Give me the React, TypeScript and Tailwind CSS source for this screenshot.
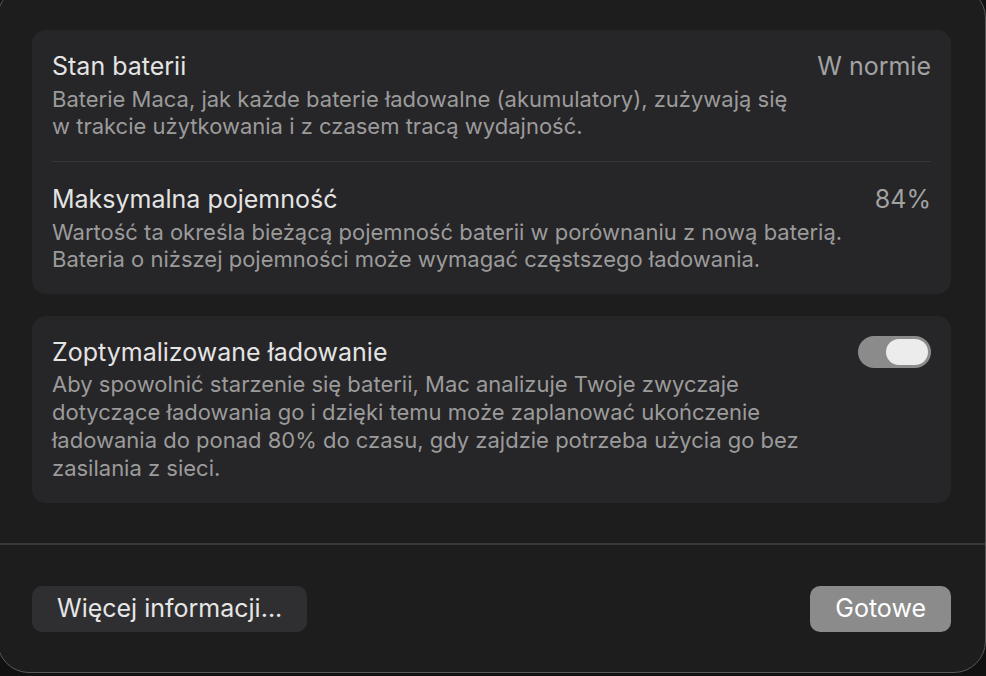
import { Fragment } from "react";

const font = { fontFamily: "Inter, 'Noto Sans', sans-serif" };

function Lines({ lines }: { lines: string[] }) {
  return (
    <>
      {lines.map((l, i) => (
        <Fragment key={i}>
          {l}
          {i < lines.length - 1 && <br />}
        </Fragment>
      ))}
    </>
  );
}

function Row({
  title,
  value,
  desc,
  className,
}: {
  title: string;
  value: string;
  desc: string[];
  className?: string;
}) {
  return (
    <div className={className}>
      <div className="flex h-[28px] items-center justify-between">
        <span className="text-[25px] leading-[28px] text-[#e4e4e4]">{title}</span>
        <span className="text-[25px] leading-[28px] text-[#a2a2a2]">{value}</span>
      </div>
      <p className="mt-[6px] text-[22px] leading-[27px] text-[#9b9b9b] whitespace-nowrap">
        <Lines lines={desc} />
      </p>
    </div>
  );
}

export default function App() {
  return (
    <div className="w-[986px] h-[676px] overflow-hidden bg-[#111111]" style={font}>
      <div className="-ml-[3px] -mt-[14px] w-[989px] h-[687px] rounded-[32px] border border-[#595959] bg-[#1e1d1e] flex flex-col">
        <div className="px-[34px] pt-[43px] flex flex-col gap-[22px]">
          <div className="rounded-[14px] bg-[#262527] px-[20px]">
            <Row
              className="pt-[22px] pb-[21px] border-b border-[#363537]"
              title="Stan baterii"
              value="W normie"
              desc={[
                "Baterie Maca, jak każde baterie ładowalne (akumulatory), zużywają się",
                "w trakcie użytkowania i z czasem tracą wydajność.",
              ]}
            />
            <Row
              className="pt-[23px] pb-[21px]"
              title="Maksymalna pojemność"
              value="84%"
              desc={[
                "Wartość ta określa bieżącą pojemność baterii w porównaniu z nową baterią.",
                "Bateria o niższej pojemności może wymagać częstszego ładowania.",
              ]}
            />
          </div>

          <div className="rounded-[14px] bg-[#262527] px-[20px] pt-[22px] pb-[21px]">
            <div className="flex h-[28px] items-center justify-between">
              <span className="text-[25px] leading-[28px] text-[#e4e4e4]">
                Zoptymalizowane ładowanie
              </span>
              <div className="w-[73px] h-[32px] shrink-0 rounded-full bg-[#8b8b8b] flex items-center justify-end pr-[3px]">
                <div className="w-[42px] h-[26px] rounded-full bg-[#ececec]" />
              </div>
            </div>
            <p className="mt-[4px] text-[22px] leading-[28px] text-[#9b9b9b] whitespace-nowrap">
              <Lines
                lines={[
                  "Aby spowolnić starzenie się baterii, Mac analizuje Twoje zwyczaje",
                  "dotyczące ładowania go i dzięki temu może zaplanować ukończenie",
                  "ładowania do ponad 80% do czasu, gdy zajdzie potrzeba użycia go bez",
                  "zasilania z sieci.",
                ]}
              />
            </p>
          </div>
        </div>

        <div className="mt-[40px] h-[2px] bg-[#3a393a]" />

        <div className="px-[34px] pt-[41px] flex items-center justify-between">
          <button className="h-[46px] px-[25px] rounded-[10px] bg-[#2f2e30] text-[25px] text-[#e6e6e6]">
            Więcej informacji...
          </button>
          <button className="h-[46px] px-[25px] rounded-[10px] bg-[#8b8b8b] text-[25px] text-white">
            Gotowe
          </button>
        </div>
      </div>
    </div>
  );
}
